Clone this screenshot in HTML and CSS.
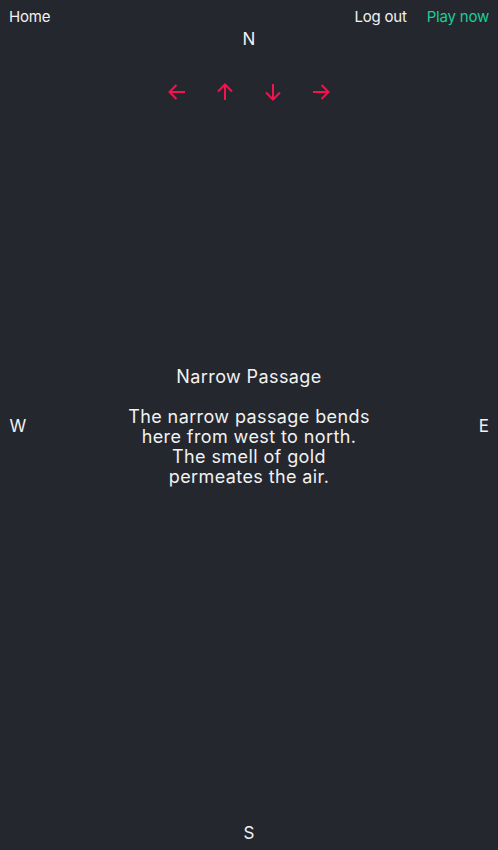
FILE: index.html
```html
<!DOCTYPE html>
<html lang="en">
<head>
<meta charset="utf-8">
<title>Narrow Passage</title>
<link rel="stylesheet" href="styles.css">
</head>
<body>
<div class="page">
  <header class="topbar">
    <a class="link" href="#">Home</a>
    <nav class="right">
      <a class="link" href="#">Log out</a>
      <a class="link play" href="#">Play now</a>
    </nav>
  </header>
  <div class="dir north">N</div>
  <div class="arrows">
    <button class="arrow" aria-label="west"><svg viewBox="0 0 18 18" width="18" height="18"><path d="M17 9H1.5M8.5 2 1.5 9l7 7"/></svg></button>
    <button class="arrow" aria-label="north"><svg viewBox="0 0 18 18" width="18" height="18"><path d="M9 17V1.5M2 8.5l7-7 7 7"/></svg></button>
    <button class="arrow" aria-label="south"><svg viewBox="0 0 18 18" width="18" height="18"><path d="M9 1v15.5M2 9.5l7 7 7-7"/></svg></button>
    <button class="arrow" aria-label="east"><svg viewBox="0 0 18 18" width="18" height="18"><path d="M1 9h15.5M9.5 2l7 7-7 7"/></svg></button>
  </div>
  <main class="middle">
    <div class="dir side">W</div>
    <section class="room">
      <h1 class="title">Narrow Passage</h1>
      <p class="desc">The narrow passage bends here from west to north. The smell of gold permeates the air.</p>
    </section>
    <div class="dir side east">E</div>
  </main>
  <div class="dir south">S</div>
</div>
</body>
</html>
```
FILE: styles.css
```css
html, body {
  margin: 0;
  padding: 0;
  background: #25272f;
}
body {
  font-family: Inter, "Noto Sans", sans-serif;
  color: #f2f2f2;
}
.page {
  height: 850px;
  display: flex;
  flex-direction: column;
}
.topbar {
  display: flex;
  justify-content: space-between;
  padding: 6px 9px 0 9px;
  height: 22px;
  line-height: 22px;
  font-size: 15px;
}
.right {
  display: flex;
  gap: 20px;
}
.link {
  color: #f2f2f2;
  text-decoration: none;
  letter-spacing: -0.2px;
}
.play {
  color: #1dcc97;
}
.dir {
  font-size: 17px;
  line-height: 22px;
  text-align: center;
}
.arrows {
  display: flex;
  justify-content: center;
  gap: 30px;
  margin-top: 30px;
  height: 24px;
  align-items: center;
}
.arrow {
  background: none;
  border: 0;
  padding: 0;
  width: 18px;
  height: 18px;
  display: flex;
}
.arrow svg {
  fill: none;
  stroke: #f5124f;
  stroke-width: 2;
}
.middle {
  flex: 1;
  display: flex;
  align-items: center;
  justify-content: space-between;
  padding: 0 9px 74px 9px;
}
.side {
  width: 18px;
}
.east {
  text-align: right;
}
.room {
  width: 248px;
  text-align: center;
}
.title {
  margin: 0;
  font-size: 18px;
  font-weight: 400;
  line-height: 22px;
  letter-spacing: 0.4px;
}
.desc {
  margin: 19px 0 0 0;
  font-size: 18px;
  line-height: 20px;
  letter-spacing: 0.4px;
}
.south {
  padding-bottom: 6px;
}
```
